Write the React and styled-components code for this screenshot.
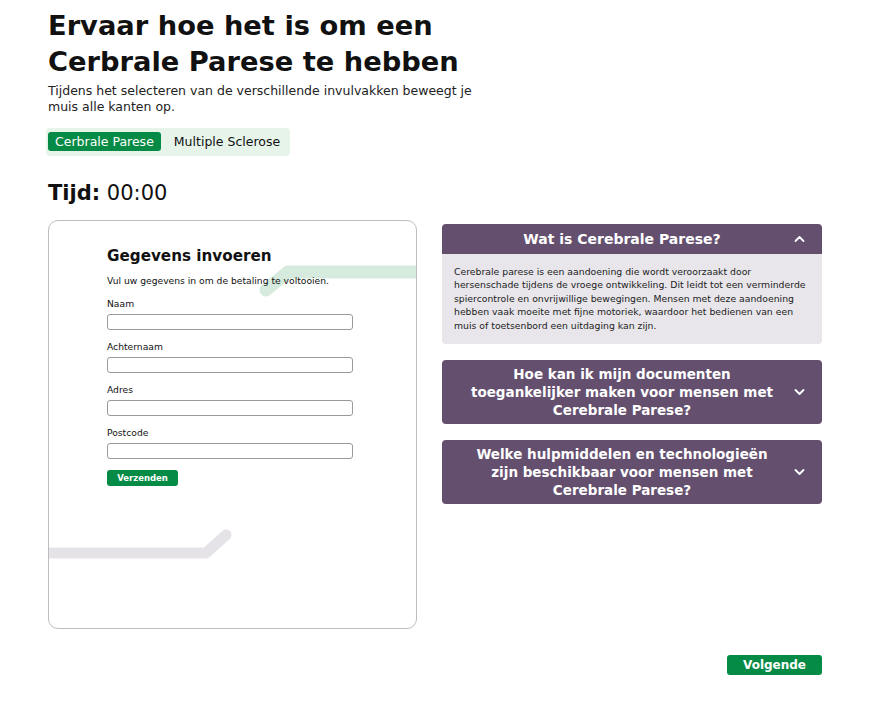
import styled, { createGlobalStyle } from "styled-components";

const Global = createGlobalStyle`
  body {
    margin: 0;
    background: #fff;
    font-family: "DejaVu Sans", "Open Sans", sans-serif;
    color: #111;
  }
`;

const Page = styled.div`
  width: 871px;
  height: 706px;
  box-sizing: border-box;
  padding: 8px 49px 0 48px;
`;

const Title = styled.h1`
  margin: 0;
  font-size: 27.3px;
  line-height: 36px;
  font-weight: 700;
  width: 460px;
`;

const Intro = styled.p`
  margin: 3px 0 0;
  font-size: 12.5px;
  line-height: 16px;
  width: 440px;
  color: #222;
`;

const Tabs = styled.div`
  display: inline-flex;
  align-items: center;
  gap: 6px;
  margin-top: 13px;
  margin-left: -2px;
  padding: 4px 3px 5px 2px;
  background: #e6f4ea;
  border-radius: 4px;
`;

const Tab = styled.button`
  border: 0;
  border-radius: 3px;
  padding: 0 7px;
  height: 19px;
  font-family: inherit;
  font-size: 12.5px;
  color: ${(p) => (p.active ? "#fff" : "#111")};
  background: ${(p) => (p.active ? "#058b45" : "transparent")};
  cursor: pointer;
`;

const Timer = styled.div`
  margin-top: 24px;
  font-size: 21px;
  line-height: 26px;
  b {
    font-weight: 700;
  }
`;

const Main = styled.div`
  display: flex;
  align-items: flex-start;
  gap: 25px;
  margin-top: 14px;
`;

const Card = styled.div`
  position: relative;
  overflow: hidden;
  width: 369px;
  height: 409px;
  box-sizing: border-box;
  border: 1px solid #bdbdbd;
  border-radius: 10px;
  padding: 25px 0 0 58px;
`;

const Deco = styled.svg`
  position: absolute;
  left: 0;
  top: 0;
  pointer-events: none;
`;

const Form = styled.form`
  position: relative;
  width: 246px;
  display: flex;
  flex-direction: column;
`;

const FormTitle = styled.h2`
  margin: 0;
  font-size: 15.2px;
  line-height: 20px;
  font-weight: 700;
`;

const Small = styled.p`
  margin: 9px 0 0;
  font-size: 9.2px;
  line-height: 12px;
`;

const Label = styled.label`
  display: block;
  margin-top: 11px;
  font-size: 9.2px;
  line-height: 12px;
`;

const Input = styled.input`
  display: block;
  margin-top: 4px;
  width: 246px;
  height: 16px;
  box-sizing: border-box;
  border: 1px solid #9a9a9a;
  border-radius: 3px;
`;

const SmallButton = styled.button`
  margin-top: 11px;
  width: 71px;
  height: 16px;
  border: 0;
  border-radius: 3px;
  background: #058b45;
  color: #fff;
  font-family: inherit;
  font-size: 8.5px;
  font-weight: 700;
  padding: 0;
`;

const Faq = styled.div`
  width: 380px;
  margin-top: 4px;
  display: flex;
  flex-direction: column;
  gap: 16px;
`;

const Item = styled.div`
  border-radius: 4px;
  overflow: hidden;
`;

const Head = styled.div`
  position: relative;
  background: #654f6f;
  color: #fff;
  font-weight: 700;
  font-size: ${(p) => (p.multi ? 13.5 : 14)}px;
  line-height: 18px;
  text-align: center;
  padding: ${(p) => (p.multi ? "5px 40px 5px 20px" : "6px 40px 6px 20px")};
`;

const Chevron = styled.svg`
  position: absolute;
  right: 17px;
  top: 50%;
  margin-top: -4px;
`;

const Body = styled.div`
  background: #e8e6eb;
  font-size: 9.3px;
  line-height: 13.4px;
  padding: 11px 12px 12px;
  color: #222;
  white-space: nowrap;
`;

const Footer = styled.div`
  display: flex;
  justify-content: flex-end;
  margin-top: 26px;
`;

const NextButton = styled.button`
  width: 95px;
  height: 20px;
  border: 0;
  border-radius: 3px;
  background: #058b45;
  color: #fff;
  font-family: inherit;
  font-size: 12px;
  font-weight: 700;
  padding: 0;
`;

function Arrow({ up }) {
  return (
    <Chevron width="11" height="8" viewBox="0 0 11 8">
      <path
        d={up ? "M1.5 6 L5.5 2 L9.5 6" : "M1.5 2 L5.5 6 L9.5 2"}
        fill="none"
        stroke="#fff"
        strokeWidth="1.8"
        strokeLinecap="round"
        strokeLinejoin="round"
      />
    </Chevron>
  );
}

const fields = ["Naam", "Achternaam", "Adres", "Postcode"];

function App() {
  return (
    <Page>
      <Global />
      <Title>Ervaar hoe het is om een Cerbrale Parese te hebben</Title>
      <Intro>
        Tijdens het selecteren van de verschillende invulvakken beweegt je muis alle kanten op.
      </Intro>
      <Tabs>
        <Tab active>Cerbrale Parese</Tab>
        <Tab>Multiple Sclerose</Tab>
      </Tabs>
      <Timer>
        <b>Tijd:</b> 00:00
      </Timer>
      <Main>
        <Card>
          <Deco width="369" height="409">
            <path
              d="M217 69 L239 51 L380 51"
              fill="none"
              stroke="#d6ebdd"
              strokeWidth="13"
              strokeLinecap="round"
              strokeLinejoin="round"
            />
            <path
              d="M-10 332 L157 332 L177 314"
              fill="none"
              stroke="#e6e3e8"
              strokeWidth="11"
              strokeLinecap="round"
              strokeLinejoin="round"
            />
          </Deco>
          <Form>
            <FormTitle>Gegevens invoeren</FormTitle>
            <Small>Vul uw gegevens in om de betaling te voltooien.</Small>
            {fields.map((f) => (
              <div key={f}>
                <Label>{f}</Label>
                <Input />
              </div>
            ))}
            <div>
              <SmallButton type="button">Verzenden</SmallButton>
            </div>
          </Form>
        </Card>
        <Faq>
          <Item>
            <Head>
              Wat is Cerebrale Parese?
              <Arrow up />
            </Head>
            <Body>
              Cerebrale parese is een aandoening die wordt veroorzaakt door
              <br />
              hersenschade tijdens de vroege ontwikkeling. Dit leidt tot een verminderde
              <br />
              spiercontrole en onvrijwillige bewegingen. Mensen met deze aandoening
              <br />
              hebben vaak moeite met fijne motoriek, waardoor het bedienen van een
              <br />
              muis of toetsenbord een uitdaging kan zijn.
            </Body>
          </Item>
          <Item>
            <Head multi>
              Hoe kan ik mijn documenten toegankelijker maken voor mensen met Cerebrale Parese?
              <Arrow />
            </Head>
          </Item>
          <Item>
            <Head multi>
              Welke hulpmiddelen en technologieën zijn beschikbaar voor mensen met Cerebrale Parese?
              <Arrow />
            </Head>
          </Item>
        </Faq>
      </Main>
      <Footer>
        <NextButton type="button">Volgende</NextButton>
      </Footer>
    </Page>
  );
}

export default App;
